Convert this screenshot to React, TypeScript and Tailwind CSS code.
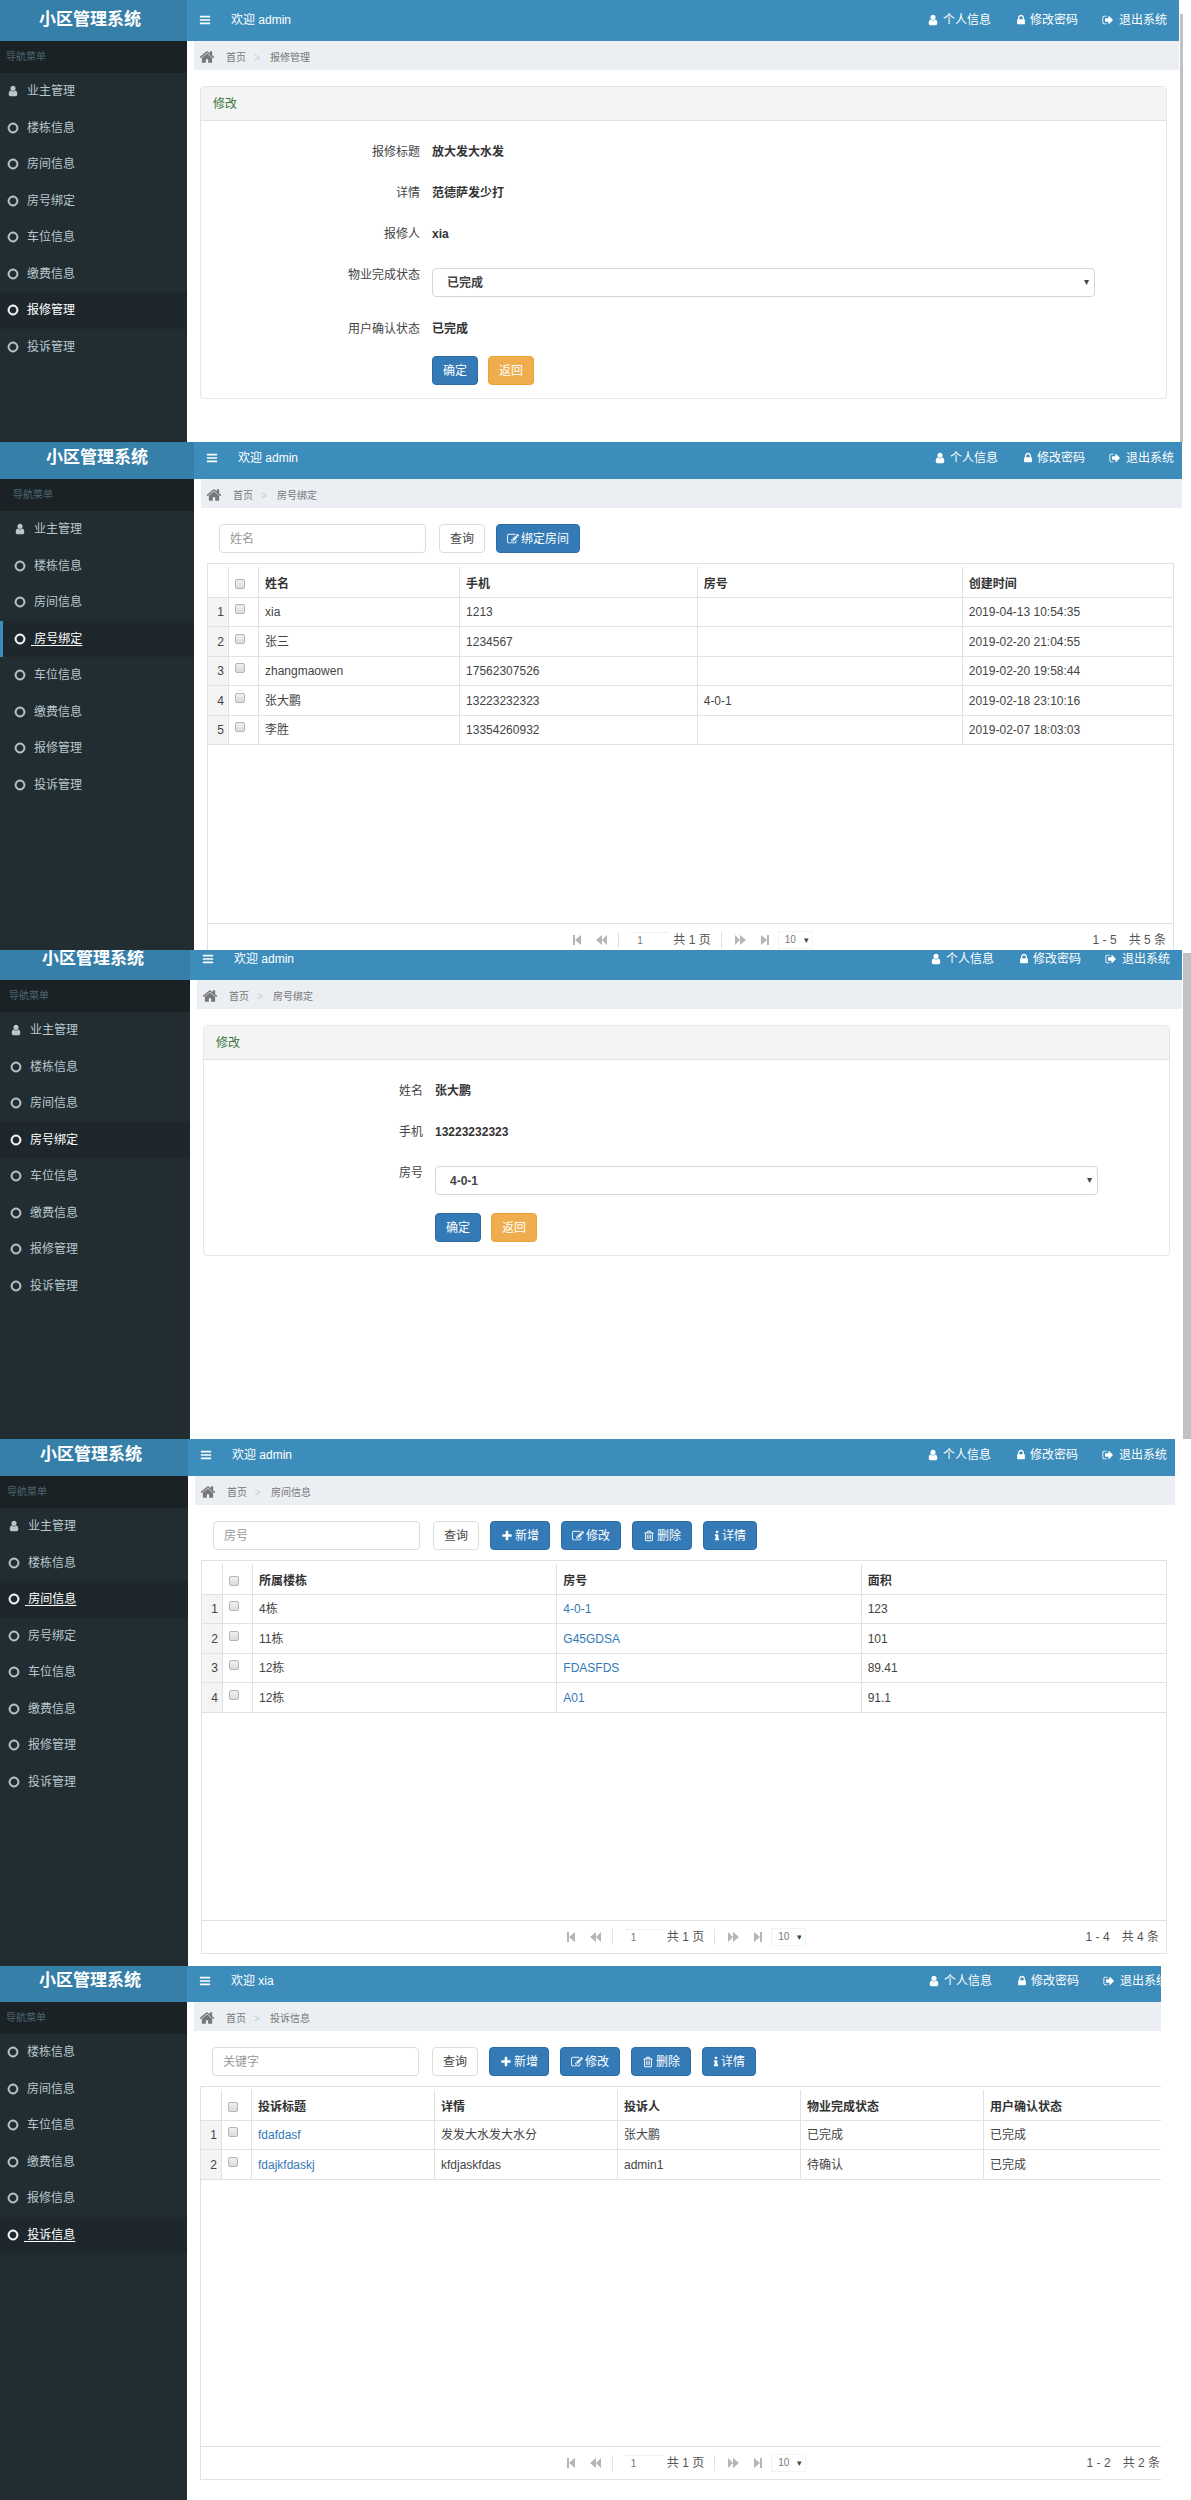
import type { ReactNode } from 'react';

// Font Awesome 4 outlines, all on a 1792 grid
const ICONS = {
  user: 'M1536 1399q0 109-62.5 187t-150.5 78h-854q-88 0-150.5-78t-62.5-187q0-85 8.5-160.5t31.5-152 58.5-131 94-89 134.5-34.5q131 128 313 128t313-128q76 0 134.5 34.5t94 89 58.5 131 31.5 152 8.5 160.5zm-256-887q0 159-112.5 271.5t-271.5 112.5-271.5-112.5-112.5-271.5 112.5-271.5 271.5-112.5 271.5 112.5 112.5 271.5z',
  lock: 'M640 768h512v-192q0-106-75-181t-181-75-181 75-75 181v192zm832 96v576q0 40-28 68t-68 28h-960q-40 0-68-28t-28-68v-576q0-40 28-68t68-28h32v-192q0-184 132-316t316-132 316 132 132 316v192h32q40 0 68 28t28 68z',
  circle: 'M896 352q-148 0-273 73t-198 198-73 273 73 273 198 198 273 73 273-73 198-198 73-273-73-273-198-198-273-73zm768 544q0 209-103 385.5t-279.5 279.5-385.5 103-385.5-103-279.5-279.5-103-385.5 103-385.5 279.5-279.5 385.5-103 385.5 103 279.5 279.5 103 385.5z',
  bars: 'M1664 1344v128q0 26-19 45t-45 19h-1408q-26 0-45-19t-19-45v-128q0-26 19-45t45-19h1408q26 0 45 19t19 45zm0-512v128q0 26-19 45t-45 19h-1408q-26 0-45-19t-19-45v-128q0-26 19-45t45-19h1408q26 0 45 19t19 45zm0-512v128q0 26-19 45t-45 19h-1408q-26 0-45-19t-19-45v-128q0-26 19-45t45-19h1408q26 0 45 19t19 45z',
  home: 'M1472 992v480q0 26-19 45t-45 19h-384v-384h-256v384h-384q-26 0-45-19t-19-45v-480q0-1 .5-3t.5-3l575-474 575 474q1 2 1 6zm223-69l-62 74q-8 9-21 11h-3q-13 0-21-7l-692-577-692 577q-12 8-24 7-13-2-21-11l-62-74q-8-10-7-23.5t11-21.5l719-599q32-26 76-26t76 26l244 204v-195q0-14 9-23t23-9h192q14 0 23 9t9 23v408l219 182q10 8 11 21.5t-7 23.5z',
  signOut: 'M704 1440q0 4 1 20t.5 26.5-3 23.5-10 19.5-20.5 6.5h-320q-119 0-203.5-84.5t-84.5-203.5v-704q0-119 84.5-203.5t203.5-84.5h320q13 0 22.5 9.5t9.5 22.5q0 4 1 20t.5 26.5-3 23.5-10 19.5-20.5 6.5h-320q-66 0-113 47t-47 113v704q0 66 47 113t113 47h312l11.5 1 11.5 3 8 5.5 7 9 2 13.5zm928-544q0 26-19 45l-544 544q-19 19-45 19t-45-19-19-45v-288h-448q-26 0-45-19t-19-45v-384q0-26 19-45t45-19h448v-288q0-26 19-45t45-19 45 19l544 544q19 19 19 45z',
  plus: 'M1600 736v192q0 40-28 68t-68 28h-416v416q0 40-28 68t-68 28h-192q-40 0-68-28t-28-68v-416h-416q-40 0-68-28t-28-68v-192q0-40 28-68t68-28h416v-416q0-40 28-68t68-28h192q40 0 68 28t28 68v416h416q40 0 68 28t28 68z',
  edit: 'M888 1184l116-116-152-152-116 116v56h96v96h56zm440-720q-16-16-33 1l-350 350q-17 17-1 33t33-1l350-350q17-17 1-33zm80 594v190q0 119-84.5 203.5t-203.5 84.5h-832q-119 0-203.5-84.5t-84.5-203.5v-832q0-119 84.5-203.5t203.5-84.5h832q63 0 117 25 15 7 18 23 3 17-9 29l-49 49q-14 14-32 8-23-6-45-6h-832q-66 0-113 47t-47 113v832q0 66 47 113t113 47h832q66 0 113-47t47-113v-126q0-13 9-22l64-64q15-15 35-7t20 29zm-96-738l288 288-672 672h-288v-288zm444 132l-92 92-288-288 92-92q28-28 68-28t68 28l152 152q28 28 28 68t-28 68z',
  info: 'M1216 1344v128q0 26-19 45t-45 19h-512q-26 0-45-19t-19-45v-128q0-26 19-45t45-19h64v-384h-64q-26 0-45-19t-19-45v-128q0-26 19-45t45-19h384q26 0 45 19t19 45v576h64q26 0 45 19t19 45zm-128-1152v192q0 26-19 45t-45 19h-256q-26 0-45-19t-19-45v-192q0-26 19-45t45-19h256q26 0 45 19t19 45z',
  trash: 'M704 736v576q0 14-9 23t-23 9h-64q-14 0-23-9t-9-23v-576q0-14 9-23t23-9h64q14 0 23 9t9 23zm256 0v576q0 14-9 23t-23 9h-64q-14 0-23-9t-9-23v-576q0-14 9-23t23-9h64q14 0 23 9t9 23zm256 0v576q0 14-9 23t-23 9h-64q-14 0-23-9t-9-23v-576q0-14 9-23t23-9h64q14 0 23 9t9 23zm128 724v-948h-896v948q0 22 7 40.5t14.5 27 10.5 8.5h832q3 0 10.5-8.5t14.5-27 7-40.5zm-672-1076h448l-48-117q-7-9-17-11h-317q-10 2-17 11zm928 32v64q0 14-9 23t-23 9h-96v948q0 83-47 143.5t-113 60.5h-832q-66 0-113-58.5t-47-141.5v-952h-96q-14 0-23-9t-9-23v-64q0-14 9-23t23-9h309l70-167q15-37 54-63t79-26h320q40 0 79 26t54 63l70 167h309q14 0 23 9t9 23z',
};

type IconName = keyof typeof ICONS;

function Icon({ name, className = 'size-3', box = '0 0 1792 1792' }: { name: IconName; className?: string; box?: string }) {
  return (
    <svg viewBox={box} className={`shrink-0 fill-current ${className}`} aria-hidden="true">
      <path d={ICONS[name]} />
    </svg>
  );
}

const ADMIN_MENU = ['业主管理', '楼栋信息', '房间信息', '房号绑定', '车位信息', '缴费信息', '报修管理', '投诉管理'];
const OWNER_MENU = ['楼栋信息', '房间信息', '车位信息', '缴费信息', '报修信息', '投诉信息'];

type ScreenProps = {
  user: string;
  menu: string[];
  menuClass?: string;
  active: string;
  hovered?: boolean;
  marked?: boolean;
  page: string;
  height: string;
  sidebar: string;
  header: string;
  gutter: string;
  edge: ReactNode;
  body?: string;
  children: ReactNode;
};

function Screen(p: ScreenProps) {
  return (
    <section className={`flex ${p.height}`}>
      <div className="min-w-0 flex-1 overflow-hidden">
        <div className={`flex h-full ${p.body ?? 'w-full'}`}>
          <aside className={`flex shrink-0 justify-end overflow-hidden bg-[#222d32] ${p.sidebar}`}>
            <div className="w-[194px] shrink-0">
              <div className={`flex items-end overflow-hidden bg-[#367fa9] ${p.header}`}>
                <a href="#" className="block w-full text-center text-[17px] leading-[42px] font-bold text-white">小区管理系统</a>
              </div>
              <p className="h-8 bg-[#1a2226] pl-[13px] text-[10px] leading-8 text-[#4b646f]">导航菜单</p>
              <ul className={`grid auto-rows-fr ${p.menuClass ?? 'h-[292px]'}`}>
                {p.menu.map((item) => {
                  const on = item === p.active;
                  return (
                    <li key={item} className={on ? 'bg-[#1e282c] text-white' : 'text-[#b8c7ce]'}>
                      <a
                        href="#"
                        className={`flex h-full items-center border-l-[3px] pl-[11px] text-xs ${on && p.marked ? 'border-[#3c8dbc]' : 'border-transparent'}`}
                      >
                        <span className="w-[17px]">
                          {item === '业主管理'
                            ? <Icon name="user" />
                            : <Icon name="circle" className="size-3 stroke-current stroke-[70]" />}
                        </span>
                        <span className={on && p.hovered ? 'underline underline-offset-2' : ''}>
                          {on && p.hovered ? <>&nbsp;</> : <span className="inline-block w-[3px]" />}
                          {item}
                        </span>
                      </a>
                    </li>
                  );
                })}
              </ul>
            </div>
          </aside>

          <div className="min-w-0 flex-1">
            <header className={`flex items-end overflow-hidden bg-[#3c8dbc] ${p.header} ${p.gutter}`}>
              <div className="flex h-[42px] w-full shrink-0 items-center pl-[12px] text-xs text-white">
                <button type="button" aria-label="切换导航"><Icon name="bars" /></button>
                <span className="ml-5">欢迎 {p.user}</span>
                <nav className="ml-auto flex gap-6">
                  <a href="#" className="flex items-center gap-1"><Icon name="user" />个人信息</a>
                  <a href="#" className="flex items-center gap-[3px]"><Icon name="lock" />修改密码</a>
                  <a href="#" className="flex items-center gap-[5px]"><Icon name="signOut" />退出系统</a>
                </nav>
              </div>
            </header>

            <div className="pl-[7px]">
              <ol className="flex h-[29px] items-center bg-[#ebeef3] pt-[3px] pl-[5px] text-[10px] text-[#777]">
                <li className="flex items-center gap-[11px]">
                  <Icon name="home" className="size-4" />
                  <a href="#">首页</a>
                </li>
                <li className="w-6 pl-2 text-[#ccc]">&gt;</li>
                <li>{p.page}</li>
              </ol>
            </div>
            <main className={`pl-[13px] ${p.gutter}`}>{p.children}</main>
          </div>
        </div>
      </div>
      {p.edge}
    </section>
  );
}

const BUTTON_TONES = {
  plain: 'border-[#ddd] bg-white text-[#444]',
  primary: 'border-[#2e6da4] bg-[#337ab7] text-white',
  warning: 'border-[#eea236] bg-[#f0ad4e] text-white',
};

function Button({ tone = 'primary', icon, children }: { tone?: keyof typeof BUTTON_TONES; icon?: IconName; children: ReactNode }) {
  return (
    <button type="button" className={`flex h-[29px] items-center gap-0.5 rounded border px-2.5 text-xs ${BUTTON_TONES[tone]}`}>
      {icon === 'info' ? (
        <Icon name="info" className="h-3 w-[6px]" box="448 0 896 1792" />
      ) : (
        icon && <Icon name={icon} />
      )}
      {children}
    </button>
  );
}

function Toolbar({ placeholder, children }: { placeholder: string; children: ReactNode }) {
  return (
    <div className="flex gap-[11px] pt-4 pb-[10px] pl-3">
      <input
        type="text"
        aria-label={placeholder}
        placeholder={placeholder}
        className="mr-0.5 h-[29px] w-[207px] rounded border border-[#ddd] px-2.5 text-xs text-[#555] placeholder:text-[#999]"
      />
      <Button tone="plain">查询</Button>
      {children}
    </div>
  );
}

function Check({ label }: { label: string }) {
  return (
    <input
      type="checkbox"
      aria-label={label}
      className="block size-[10px] appearance-none rounded-xs border border-[#b4b4b4] bg-linear-to-b from-[#f0f0f0] to-[#dcdcdc]"
    />
  );
}

function PagerIcon({ d, label }: { d: string; label: string }) {
  return (
    <button type="button" aria-label={label} className="text-[#b5b5b5]">
      <svg viewBox="0 0 12 12" className="size-3 fill-current" aria-hidden="true"><path d={d} /></svg>
    </button>
  );
}

function Pager({ count }: { count: number }) {
  return (
    <div className="mt-auto grid h-[33px] grid-cols-[1fr_auto_1fr] items-center border-t border-[#e1e1e1] text-xs text-[#555]">
      <span />
      <div className="flex items-center pl-1">
        <PagerIcon label="首页" d="M1 1h2v10h-2zM9 1v10l-6-5z" />
        <span className="ml-3 flex"><PagerIcon label="上一页" d="M6 1v10l-6-5zM11 1v10l-5-5z" /></span>
        <span className="ml-2.5 h-4 border-l border-[#e1e1e1]" />
        <input type="text" aria-label="页码" defaultValue="1" className="ml-3 h-4 w-[38px] border-t border-[#f0f0f0] px-1.5 text-[10px] text-[#777]" />
        <span className="ml-1">共 1 页</span>
        <span className="ml-2.5 h-4 border-l border-[#e1e1e1]" />
        <span className="ml-3 flex"><PagerIcon label="下一页" d="M1 1v10l5-5zM6 1v10l6-5z" /></span>
        <span className="ml-3 flex"><PagerIcon label="末页" d="M3 1v10l6-5zM9 1h2v10h-2z" /></span>
        <span className="relative ml-2 flex">
          <select aria-label="每页条数" className="h-[18px] w-[35px] appearance-none border border-[#f3f3f3] px-1.5 text-[10px] text-[#777]">
            <option>10</option>
            <option>20</option>
          </select>
          <span className="pointer-events-none absolute top-1 right-1 text-[9px] leading-[10px] text-[#444]">▾</span>
        </span>
      </div>
      <span className="pr-[7px] text-right">
        1 - {count}
        <span className="ml-3">共 {count} 条</span>
      </span>
    </div>
  );
}

type Column = { title: string; width?: string; link?: boolean };

function DataGrid({ columns, rows }: { columns: Column[]; rows: string[][] }) {
  return (
    <div className="flex h-[394px] flex-col border border-[#e1e1e1] pt-[3px]">
      <table className="w-full table-fixed border-separate border-spacing-0 text-left text-xs text-[#444] [&_td]:border-b [&_th]:border-b [&_td]:border-r [&_th]:border-r [&_td]:border-[#e1e1e1] [&_th]:border-[#e1e1e1] [&_tr>*:last-child]:border-r-0">
        <thead>
          <tr className="h-[31px]">
            <th className="w-[21px]" />
            <th className="w-[30px] pt-1 pl-1.5"><Check label="全选" /></th>
            {columns.map((c) => (
              <th key={c.title} className={`pt-1 pl-1.5 font-bold text-[#333] ${c.width ?? ''}`}>{c.title}</th>
            ))}
          </tr>
        </thead>
        <tbody>
          {rows.map((row, i) => (
            <tr key={i} className="odd:h-[29px] even:h-[30px]">
              <td className="bg-[#f4f4f4] pr-1 text-right">{i + 1}</td>
              <td className="pb-1.5 pl-1.5"><Check label={`选择第 ${i + 1} 行`} /></td>
              {row.map((cell, j) => (
                <td key={j} className="pl-1.5">
                  {columns[j].link ? <a href="#" className="text-[#337ab7]">{cell}</a> : cell}
                </td>
              ))}
            </tr>
          ))}
        </tbody>
      </table>
      <Pager count={rows.length} />
    </div>
  );
}

type Field = { label: string; value: string; options?: string[] };

function EditPanel({ id, fields }: { id: string; fields: Field[] }) {
  return (
    <form className="mt-4 rounded border border-[#e6e6e6]">
      <h2 className="h-[34px] border-b border-[#e1e1e1] bg-[#f4f4f4] pl-3 text-xs leading-[34px] text-[#3c763d]">修改</h2>
      <div className="pt-[17px] pb-[13px] text-xs text-[#333]">
        {fields.map((f) => (
          <div key={f.label} className="mb-3 flex">
            <label htmlFor={`${id}-${f.label}`} className="w-[219px] shrink-0 text-right leading-[29px] text-[#444]">{f.label}</label>
            {f.options ? (
              <div className="relative mt-[7px] mr-[71px] mb-[6px] ml-3 flex-1">
                <select id={`${id}-${f.label}`} className="h-[29px] w-full appearance-none rounded border border-[#d5d5d5] bg-white px-3.5 text-xs font-bold text-[#444]">
                  {f.options.map((o) => <option key={o}>{o}</option>)}
                </select>
                <span className="pointer-events-none absolute top-2 right-1.5 text-[10px] leading-3 text-[#444]">▾</span>
              </div>
            ) : (
              <output id={`${id}-${f.label}`} className="ml-3 leading-[29px] font-bold">{f.value}</output>
            )}
          </div>
        ))}
        <div className="flex gap-2.5 pl-[231px]">
          <Button>确定</Button>
          <Button tone="warning">返回</Button>
        </div>
      </div>
    </form>
  );
}

export default function App() {
  return (
    <div className="bg-white font-['Liberation_Sans','Noto_Sans_CJK_SC',sans-serif]">
      <Screen
        user="admin" menu={ADMIN_MENU} active="报修管理" page="报修管理"
        height="h-[442px]" sidebar="w-[187px]" header="h-[41px]" gutter="pr-3"
        edge={<div className="w-3 pt-3.5 pl-px"><div className="h-full w-[3px] bg-[#c1c1c1]" /></div>}
      >
        <EditPanel
          id="repair"
          fields={[
            { label: '报修标题', value: '放大发大水发' },
            { label: '详情', value: '范德萨发少打' },
            { label: '报修人', value: 'xia' },
            { label: '物业完成状态', value: '已完成', options: ['已完成', '待确认'] },
            { label: '用户确认状态', value: '已完成' },
          ]}
        />
      </Screen>

      <Screen
        user="admin" menu={ADMIN_MENU} active="房号绑定" hovered marked page="房号绑定"
        height="h-[508px]" sidebar="w-[194px]" header="h-[37px]" gutter="pr-2"
        edge={<div className="w-[9px]" />}
      >
        <Toolbar placeholder="姓名">
          <Button icon="edit">绑定房间</Button>
        </Toolbar>
        <DataGrid
          columns={[
            { title: '姓名', width: 'w-[22%]' },
            { title: '手机', width: 'w-[26%]' },
            { title: '房号', width: 'w-[29%]' },
            { title: '创建时间', width: 'w-[23%]' },
          ]}
          rows={[
            ['xia', '1213', '', '2019-04-13 10:54:35'],
            ['张三', '1234567', '', '2019-02-20 21:04:55'],
            ['zhangmaowen', '17562307526', '', '2019-02-20 19:58:44'],
            ['张大鹏', '13223232323', '4-0-1', '2019-02-18 23:10:16'],
            ['李胜', '13354260932', '', '2019-02-07 18:03:03'],
          ]}
        />
      </Screen>

      <Screen
        user="admin" menu={ADMIN_MENU} active="房号绑定" page="房号绑定"
        height="h-[489px]" sidebar="w-[190px]" header="h-[30px]" gutter="pr-3"
        edge={<div className="w-[9px] pt-[3px] pl-px"><div className="h-full bg-[#c1c1c1]" /></div>}
      >
        <EditPanel
          id="room"
          fields={[
            { label: '姓名', value: '张大鹏' },
            { label: '手机', value: '13223232323' },
            { label: '房号', value: '4-0-1', options: ['4-0-1', 'G45GDSA', 'FDASFDS', 'A01'] },
          ]}
        />
      </Screen>

      <Screen
        user="admin" menu={ADMIN_MENU} active="房间信息" hovered page="房间信息"
        height="h-[527px]" sidebar="w-[188px]" header="h-[37px]" gutter="pr-2"
        edge={<div className="w-4" />}
      >
        <Toolbar placeholder="房号">
          <Button icon="plus">新增</Button>
          <Button icon="edit">修改</Button>
          <Button icon="trash">删除</Button>
          <Button icon="info">详情</Button>
        </Toolbar>
        <DataGrid
          columns={[{ title: '所属楼栋' }, { title: '房号', link: true }, { title: '面积' }]}
          rows={[
            ['4栋', '4-0-1', '123'],
            ['11栋', 'G45GDSA', '101'],
            ['12栋', 'FDASFDS', '89.41'],
            ['12栋', 'A01', '91.1'],
          ]}
        />
      </Screen>

      <Screen
        user="xia" menu={OWNER_MENU} menuClass="h-[219px]" active="投诉信息" hovered page="投诉信息"
        height="h-[534px]" sidebar="w-[187px]" header="h-[36px]" gutter="pr-2" body="w-[calc(100%+15px)]"
        edge={<div className="w-[30px]" />}
      >
        <Toolbar placeholder="关键字">
          <Button icon="plus">新增</Button>
          <Button icon="edit">修改</Button>
          <Button icon="trash">删除</Button>
          <Button icon="info">详情</Button>
        </Toolbar>
        <DataGrid
          columns={[{ title: '投诉标题', link: true }, { title: '详情' }, { title: '投诉人' }, { title: '物业完成状态' }, { title: '用户确认状态' }]}
          rows={[
            ['fdafdasf', '发发大水发大水分', '张大鹏', '已完成', '已完成'],
            ['fdajkfdaskj', 'kfdjaskfdas', 'admin1', '待确认', '已完成'],
          ]}
        />
      </Screen>
    </div>
  );
}
